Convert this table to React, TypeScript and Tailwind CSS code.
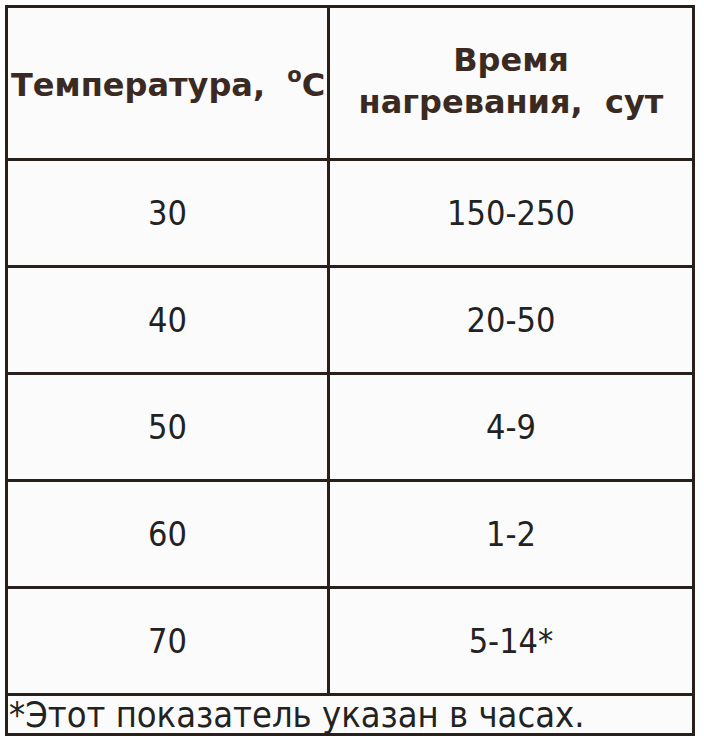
import React from 'react';

const rows = [
  ['30', '150-250'],
  ['40', '20-50'],
  ['50', '4-9'],
  ['60', '1-2'],
  ['70', '5-14*'],
];

export default function App() {
  return (
    <main className="w-[704px] h-[746px] bg-white pt-[5px] pl-[5px]">
      <div className="w-[690px] border-[3px] border-[#2a201b] bg-[#fbfbfb]">
        <div className="grid grid-cols-[322px_1fr] h-[150px] font-['DejaVu_Sans',sans-serif] font-bold text-[#3a2a22]">
          <div className="border-r-[3px] border-[#2a201b] flex items-center pl-[3px] pt-[4px] text-[32px] whitespace-pre">
            Температура,  <span className="relative -top-[9px] text-[21px]">o</span>C
          </div>
          <div className="flex flex-col items-center justify-center text-[32px] leading-[42px] whitespace-pre pb-[4px]">
            <span>Время</span>
            <span>нагревания,  сут</span>
          </div>
        </div>
        {rows.map(([t, d]) => (
          <div key={t} className="grid grid-cols-[322px_1fr] h-[107px] border-t-[3px] border-[#2a201b] font-['DejaVu_Sans_Condensed','DejaVu_Sans',sans-serif] text-[34px] text-[#222]">
            <div className="border-r-[3px] border-[#2a201b] flex items-center justify-center">{t}</div>
            <div className="flex items-center justify-center">{d}</div>
          </div>
        ))}
        <div className="h-[40px] border-t-[3px] border-[#2a201b] flex items-center pl-[1px] font-['DejaVu_Sans_Condensed','DejaVu_Sans',sans-serif] text-[36px] leading-none text-[#222]">
          *Этот показатель указан в часах.
        </div>
      </div>
    </main>
  );
}
